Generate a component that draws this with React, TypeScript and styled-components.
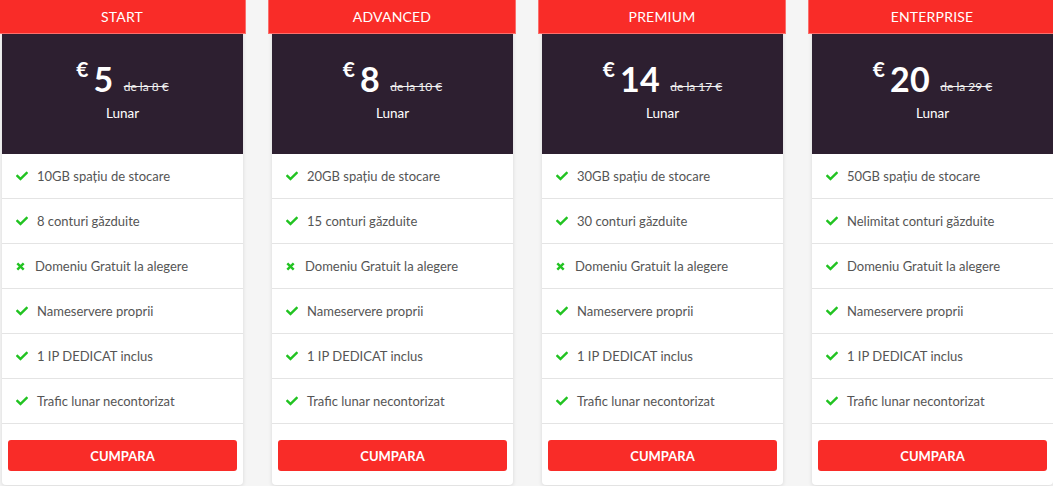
import styled, { createGlobalStyle } from 'styled-components';
import { FaCheck } from 'react-icons/fa';

const plans = [
  {
    id: 1,
    name: 'START',
    price: '5',
    oldPrice: 'de la 8 €',
    features: [
      { text: '10GB spațiu de stocare', ok: true },
      { text: '8 conturi găzduite', ok: true },
      { text: 'Domeniu Gratuit la alegere', ok: false },
      { text: 'Nameservere proprii', ok: true },
      { text: '1 IP DEDICAT inclus', ok: true },
      { text: 'Trafic lunar necontorizat', ok: true },
    ],
  },
  {
    id: 2,
    name: 'ADVANCED',
    price: '8',
    oldPrice: 'de la 10 €',
    features: [
      { text: '20GB spațiu de stocare', ok: true },
      { text: '15 conturi găzduite', ok: true },
      { text: 'Domeniu Gratuit la alegere', ok: false },
      { text: 'Nameservere proprii', ok: true },
      { text: '1 IP DEDICAT inclus', ok: true },
      { text: 'Trafic lunar necontorizat', ok: true },
    ],
  },
  {
    id: 3,
    name: 'PREMIUM',
    price: '14',
    oldPrice: 'de la 17 €',
    features: [
      { text: '30GB spațiu de stocare', ok: true },
      { text: '30 conturi găzduite', ok: true },
      { text: 'Domeniu Gratuit la alegere', ok: false },
      { text: 'Nameservere proprii', ok: true },
      { text: '1 IP DEDICAT inclus', ok: true },
      { text: 'Trafic lunar necontorizat', ok: true },
    ],
  },
  {
    id: 4,
    name: 'ENTERPRISE',
    price: '20',
    oldPrice: 'de la 29 €',
    features: [
      { text: '50GB spațiu de stocare', ok: true },
      { text: 'Nelimitat conturi găzduite', ok: true },
      { text: 'Domeniu Gratuit la alegere', ok: true },
      { text: 'Nameservere proprii', ok: true },
      { text: '1 IP DEDICAT inclus', ok: true },
      { text: 'Trafic lunar necontorizat', ok: true },
    ],
  },
];

const GlobalStyle = createGlobalStyle`
  body {
    margin: 0;
    background: #f5f5f5;
    font-family: Lato, "Open Sans", sans-serif;
  }
`;

const Wrapper = styled.div`
  display: flex;
  gap: 29px;
  padding-left: 2px;
  height: 486px;
  overflow: hidden;
`;

const Card = styled.div`
  width: 241px;
  flex-shrink: 0;
  background: #fff;
  border-radius: 0 0 4px 4px;
  box-shadow: 0 1px 4px rgba(0, 0, 0, 0.12);
  display: flex;
  flex-direction: column;
  height: 485px;
`;

const Header = styled.div`
  height: 34px;
  margin: 0 -3px 0 -4px;
  box-sizing: border-box;
  background: #f92c28;
  border: 1px solid #fb6f6c;
  border-top: none;
  color: #fff;
  font-size: 14px;
  letter-spacing: 0.2px;
  display: flex;
  align-items: center;
  justify-content: center;
`;

const PriceBox = styled.div`
  height: 120px;
  background: #2d1f30;
  color: #fff;
  display: flex;
  flex-direction: column;
  align-items: center;
  justify-content: center;
  padding-bottom: 6px;
  box-sizing: border-box;
`;

const PriceLine = styled.div`
  display: flex;
  align-items: flex-end;
  line-height: 1;
`;

const Currency = styled.span`
  font-size: 21px;
  font-weight: bold;
  align-self: flex-start;
  margin-right: 5px;
  margin-top: -4px;
`;

const Amount = styled.span`
  font-size: 34px;
  font-weight: bold;
  letter-spacing: 0.5px;
`;

const OldPrice = styled.span`
  font-size: 12px;
  text-decoration: line-through;
  margin-left: 10px;
  margin-bottom: 3px;
  color: #f2f2f2;
`;

const Period = styled.div`
  font-size: 13.5px;
  margin-top: 9px;
`;

const FeatureList = styled.ul`
  list-style: none;
  margin: 0;
  padding: 0;
`;

const Feature = styled.li`
  height: 45px;
  box-sizing: border-box;
  border-bottom: 1px solid #e4e4e4;
  display: flex;
  align-items: center;
  padding-left: 14px;
  font-size: 13px;
  color: #555;
`;

const Icon = styled.span<{ $ok: boolean }>`
  color: #22c322;
  display: flex;
  width: ${(p) => (p.$ok ? '21px' : '19px')};
  font-size: 12px;
`;

const ButtonWrap = styled.div`
  padding: 16px 6px 0;
`;

const Button = styled.button`
  width: 100%;
  height: 31px;
  background: #f92c28;
  color: #fff;
  border: none;
  border-radius: 3px;
  font-family: inherit;
  font-size: 13px;
  font-weight: bold;
  cursor: pointer;
`;

const Cross = () => (
  <svg width="9" height="9" viewBox="0 0 9 9">
    <path d="M1.3 1.3 L7.7 7.7 M7.7 1.3 L1.3 7.7" stroke="currentColor" strokeWidth="2.4" />
  </svg>
);

const PricingTable = () => {
  return (
    <Wrapper>
      <GlobalStyle />
      {plans.map((plan) => (
        <Card key={plan.id}>
          <Header>{plan.name}</Header>
          <PriceBox>
            <PriceLine>
              <Currency>€</Currency>
              <Amount>{plan.price}</Amount>
              <OldPrice>{plan.oldPrice}</OldPrice>
            </PriceLine>
            <Period>Lunar</Period>
          </PriceBox>
          <FeatureList>
            {plan.features.map((f) => (
              <Feature key={f.text}>
                <Icon $ok={f.ok}>{f.ok ? <FaCheck /> : <Cross />}</Icon>
                {f.text}
              </Feature>
            ))}
          </FeatureList>
          <ButtonWrap>
            <Button>CUMPARA</Button>
          </ButtonWrap>
        </Card>
      ))}
    </Wrapper>
  );
};

export default PricingTable;
